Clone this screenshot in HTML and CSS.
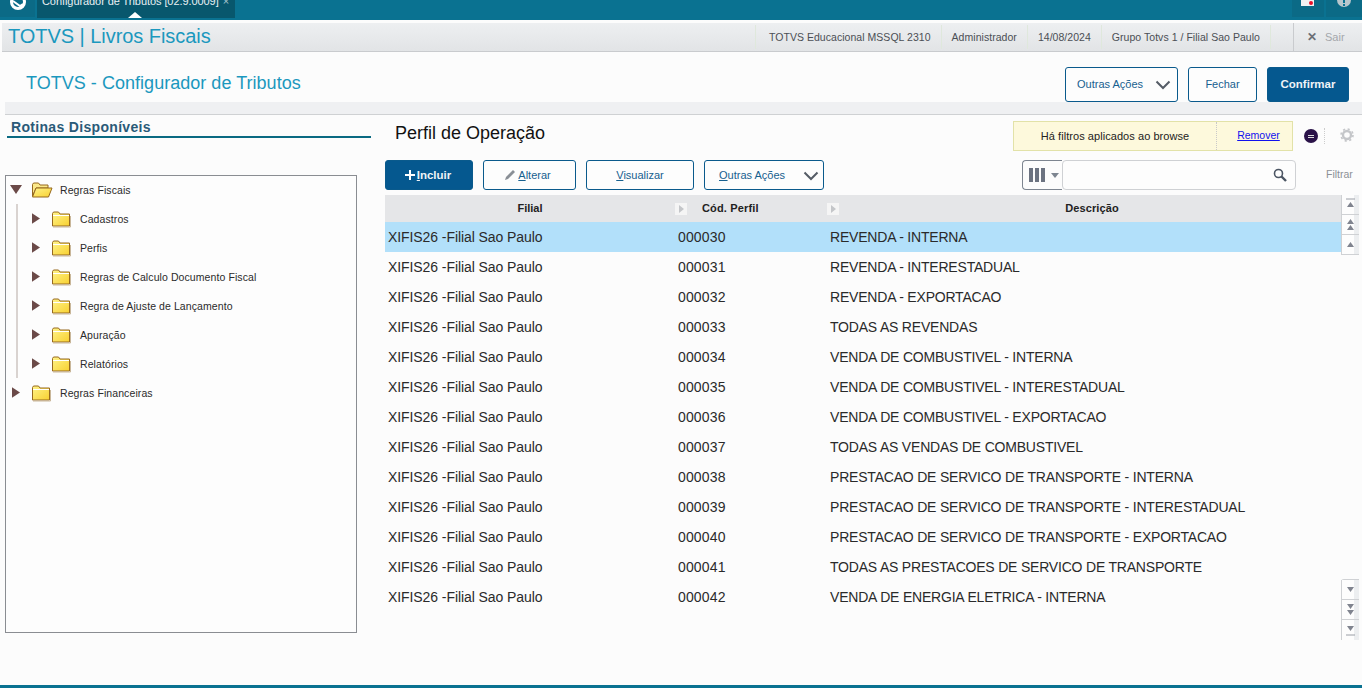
FILE: index.html
```html
<!DOCTYPE html>
<html lang="pt">
<head>
<meta charset="utf-8">
<title>TOTVS | Livros Fiscais</title>
<link rel="stylesheet" href="styles.css">
</head>
<body>
<svg class="defs" width="0" height="0">
  <defs>
    <linearGradient id="fg" x1="0" y1="0" x2="1" y2="1"><stop offset="0" stop-color="#fff48a"/><stop offset="1" stop-color="#f8d030"/></linearGradient>
    <symbol id="folder" viewBox="0 0 20 18">
      <path d="M1.500 16V3.500L2.500 2H7.500L9 4H18.500V16Z" fill="url(#fg)" stroke="#96681f" stroke-width="1"/>
      <path d="M2 5.500H18" stroke="#fff" stroke-width="1"/>
      <path d="M2 17H19.500V6" fill="none" stroke="#c9b79a" stroke-width="1"/>
    </symbol>
    <symbol id="folder-open" viewBox="0 0 22 18">
      <path d="M1.500 15V3.500L2.500 2H7.500L9 4H17V7H5L1.500 15Z" fill="#fbe98a" stroke="#96681f" stroke-width="1"/>
      <path d="M1.500 16L5 7H21L17.500 16Z" fill="url(#fg)" stroke="#96681f" stroke-width="1"/>
    </symbol>
    <symbol id="tri" viewBox="0 0 9 12"><path d="M0 0L9 6L0 12Z" fill="#6b4a48"/></symbol>
  </defs>
</svg>
<div class="page">
  <div class="topbar">
    <div class="logo-cell">
      <svg class="logo" viewBox="0 0 20 20"><circle cx="10" cy="6" r="6.500" fill="none" stroke="#fff" stroke-width="3"/><path d="M5 5L12 10L15 8" stroke="#fff" stroke-width="2" fill="none"/></svg>
    </div>
    <div class="tab">
      <span class="tab-text">Configurador de Tributos [02.9.0009]</span><span class="tab-x">×</span>
      <span class="tab-caret"></span>
    </div>
    <div class="top-spacer"></div>
    <div class="top-cell">
      <svg class="mail" viewBox="0 0 14 8"><rect width="13" height="6" fill="#f2f2f2"/><circle cx="10" cy="3" r="2" fill="#e8102a"/></svg>
    </div>
    <div class="top-cell last">
      <svg class="info" viewBox="0 0 14 8"><circle cx="7" cy="0" r="7" fill="#b8c6cc"/><rect x="6" y="0" width="2" height="3" fill="#0a7291"/><rect x="6" y="4" width="2" height="2" fill="#0a7291"/></svg>
    </div>
  </div>
  <div class="appbar">
    <div class="app-title">TOTVS | Livros Fiscais</div>
    <div class="info-list">
      <span class="info-item first">TOTVS Educacional MSSQL 2310</span>
      <span class="info-item">Administrador</span>
      <span class="info-item">14/08/2024</span>
      <span class="info-item">Grupo Totvs 1 / Filial Sao Paulo</span>
    </div>
    <div class="exit"><span class="exit-x">✕</span><span>Sair</span></div>
  </div>
  <div class="title-row">
    <div class="page-title">TOTVS - Configurador de Tributos</div>
    <div class="title-actions">
      <button class="btn btn-more-top">Outras Ações<svg class="chev" viewBox="0 0 16 10"><path d="M1.500 1.500L8 8L14.500 1.500" fill="none" stroke="#555c66" stroke-width="2"/></svg></button>
      <button class="btn btn-close">Fechar</button>
      <button class="btn primary btn-confirm">Confirmar</button>
    </div>
  </div>
  <div class="strip"></div>
  <div class="main">
    <aside class="left">
      <div class="left-head">Rotinas Disponíveis</div>
      <div class="tree">
        <div class="tree-row top">
          <svg class="arrow-down" viewBox="0 0 12 9"><path d="M0 0H12L6 9Z" fill="#6b4a48"/></svg>
          <svg class="folder-open"><use href="#folder-open"/></svg>
          <span>Regras Fiscais</span>
        </div>
        <div class="tree-children">
          <div class="tree-row"><svg class="arrow"><use href="#tri"/></svg><svg class="folder"><use href="#folder"/></svg><span>Cadastros</span></div>
          <div class="tree-row"><svg class="arrow"><use href="#tri"/></svg><svg class="folder"><use href="#folder"/></svg><span>Perfis</span></div>
          <div class="tree-row"><svg class="arrow"><use href="#tri"/></svg><svg class="folder"><use href="#folder"/></svg><span>Regras de Calculo Documento Fiscal</span></div>
          <div class="tree-row"><svg class="arrow"><use href="#tri"/></svg><svg class="folder"><use href="#folder"/></svg><span>Regra de Ajuste de Lançamento</span></div>
          <div class="tree-row"><svg class="arrow"><use href="#tri"/></svg><svg class="folder"><use href="#folder"/></svg><span>Apuração</span></div>
          <div class="tree-row"><svg class="arrow"><use href="#tri"/></svg><svg class="folder"><use href="#folder"/></svg><span>Relatórios</span></div>
        </div>
        <div class="tree-row closed"><svg class="arrow"><use href="#tri"/></svg><svg class="folder"><use href="#folder"/></svg><span>Regras Financeiras</span></div>
      </div>
    </aside>
    <section class="right">
      <div class="right-head">
        <h1 class="browse-title">Perfil de Operação</h1>
        <div class="filter-note">
          <span class="filter-text">Há filtros aplicados ao browse</span>
          <a class="filter-link" href="#">Remover</a>
        </div>
        <span class="dot"><span class="dot-in"></span></span>
        <span class="sep"></span>
        <svg class="gear" viewBox="0 0 14 14"><circle cx="7" cy="7" r="4" fill="none" stroke="#c4c6c9" stroke-width="2.400"/><circle cx="7" cy="7" r="6" fill="none" stroke="#c4c6c9" stroke-width="1.600" stroke-dasharray="2.200 2.500"/></svg>
      </div>
      <div class="toolbar">
        <button class="btn primary btn-add"><svg class="plus" viewBox="0 0 10 10"><path d="M5 0V10M0 5H10" stroke="#fff" stroke-width="2"/></svg><span><u>I</u>ncluir</span></button>
        <button class="btn btn-edit"><svg class="pen" viewBox="0 0 12 12"><path d="M1 11L2 8L9 1L11 3L4 10Z" fill="#8a8f96"/></svg><span><u>A</u>lterar</span></button>
        <button class="btn btn-view"><span><u>V</u>isualizar</span></button>
        <button class="btn btn-more"><span><u>O</u>utras Ações</span><svg class="chev" viewBox="0 0 16 10"><path d="M1.500 1.500L8 8L14.500 1.500" fill="none" stroke="#555c66" stroke-width="2"/></svg></button>
        <div class="tool-spacer"></div>
        <div class="search">
          <div class="col-pick">
            <svg class="cols" viewBox="0 0 16 14"><path d="M0 0H4V14H0ZM6 0H10V14H6ZM12 0H16V14H12Z" fill="#6b7280"/></svg>
            <span class="caret"></span>
          </div>
          <div class="search-input">
            <svg class="lens" viewBox="0 0 14 14"><circle cx="5.500" cy="5.500" r="4" fill="none" stroke="#4b5563" stroke-width="1.600"/><path d="M8.500 8.500L13 13" stroke="#4b5563" stroke-width="2.400"/></svg>
          </div>
        </div>
        <span class="filter-label">Filtrar</span>
      </div>
      <div class="grid-wrap">
        <div class="grid-scroll">
          <div class="row head">
            <div class="c1">Filial<span class="sort"></span></div>
            <div class="c2">Cód. Perfil<span class="sort"></span></div>
            <div class="c3">Descrição</div>
          </div>
          <div class="row selected"><div class="c1">XIFIS26 -Filial Sao Paulo</div><div class="c2">000030</div><div class="c3">REVENDA - INTERNA</div></div>
          <div class="row"><div class="c1">XIFIS26 -Filial Sao Paulo</div><div class="c2">000031</div><div class="c3">REVENDA - INTERESTADUAL</div></div>
          <div class="row"><div class="c1">XIFIS26 -Filial Sao Paulo</div><div class="c2">000032</div><div class="c3">REVENDA - EXPORTACAO</div></div>
          <div class="row"><div class="c1">XIFIS26 -Filial Sao Paulo</div><div class="c2">000033</div><div class="c3">TODAS AS REVENDAS</div></div>
          <div class="row"><div class="c1">XIFIS26 -Filial Sao Paulo</div><div class="c2">000034</div><div class="c3">VENDA DE COMBUSTIVEL - INTERNA</div></div>
          <div class="row"><div class="c1">XIFIS26 -Filial Sao Paulo</div><div class="c2">000035</div><div class="c3">VENDA DE COMBUSTIVEL - INTERESTADUAL</div></div>
          <div class="row"><div class="c1">XIFIS26 -Filial Sao Paulo</div><div class="c2">000036</div><div class="c3">VENDA DE COMBUSTIVEL - EXPORTACAO</div></div>
          <div class="row"><div class="c1">XIFIS26 -Filial Sao Paulo</div><div class="c2">000037</div><div class="c3">TODAS AS VENDAS DE COMBUSTIVEL</div></div>
          <div class="row"><div class="c1">XIFIS26 -Filial Sao Paulo</div><div class="c2">000038</div><div class="c3">PRESTACAO DE SERVICO DE TRANSPORTE - INTERNA</div></div>
          <div class="row"><div class="c1">XIFIS26 -Filial Sao Paulo</div><div class="c2">000039</div><div class="c3">PRESTACAO DE SERVICO DE TRANSPORTE - INTERESTADUAL</div></div>
          <div class="row"><div class="c1">XIFIS26 -Filial Sao Paulo</div><div class="c2">000040</div><div class="c3">PRESTACAO DE SERVICO DE TRANSPORTE - EXPORTACAO</div></div>
          <div class="row"><div class="c1">XIFIS26 -Filial Sao Paulo</div><div class="c2">000041</div><div class="c3">TODAS AS PRESTACOES DE SERVICO DE TRANSPORTE</div></div>
          <div class="row"><div class="c1">XIFIS26 -Filial Sao Paulo</div><div class="c2">000042</div><div class="c3">VENDA DE ENERGIA ELETRICA - INTERNA</div></div>
        </div>
        <div class="scrollbar">
          <div class="sb-group">
            <div class="sb-btn"><svg viewBox="0 0 18 19"><path d="M4 4H13" stroke="#9a9ea6"/><path d="M5 12L8.500 7L12 12Z" fill="#80848f"/></svg></div>
            <div class="sb-btn"><svg viewBox="0 0 18 19"><path d="M5 9L8.500 4L12 9ZM5 15L8.500 10L12 15Z" fill="#80848f"/></svg></div>
            <div class="sb-btn"><svg viewBox="0 0 18 19"><path d="M5 12L8.500 7L12 12Z" fill="#80848f"/></svg></div>
          </div>
          <div class="sb-group bottom">
            <div class="sb-btn"><svg viewBox="0 0 18 19"><path d="M5 7L8.500 12L12 7Z" fill="#80848f"/></svg></div>
            <div class="sb-btn"><svg viewBox="0 0 18 19"><path d="M5 4L8.500 9L12 4ZM5 10L8.500 15L12 10Z" fill="#80848f"/></svg></div>
            <div class="sb-btn"><svg viewBox="0 0 18 19"><path d="M5 6L8.500 11L12 6Z" fill="#80848f"/><path d="M4 15H13" stroke="#9a9ea6"/></svg></div>
          </div>
        </div>
      </div>
    </section>
  </div>
</div>
</body>
</html>
```

FILE: styles.css
```css
* { box-sizing: border-box; }
html, body { margin: 0; padding: 0; height: 100%; overflow: hidden; background: #fcfcfc; }
body { font-family: "Liberation Sans", Arial, sans-serif; color: #222; }
.defs { position: absolute; }
.page { width: 1362px; height: 688px; display: flex; flex-direction: column; border-bottom: 3px solid #0a7291; }

/* top bar */
.topbar { height: 20px; background: #0a7291; display: flex; flex: none; overflow: hidden; }
.logo-cell { width: 35px; height: 17px; background: #0b6a86; display: flex; justify-content: center; }
.logo { width: 20px; height: 20px; margin-top: -4px; }
.tab { width: 198px; height: 18px; margin-left: 2px; background: #08576d; color: #e8f0f3; font-size: 11px; padding-left: 5px; line-height: 10px; position: relative; white-space: nowrap; overflow: hidden; }
.tab-text { letter-spacing: -.07px; position: relative; top: -4px; }
.tab-x { position: relative; top: -4px; margin-left: 4px; color: #a9c6d0; }
.tab-caret { position: absolute; left: 91px; bottom: 0; width: 0; height: 0; border-left: 7px solid transparent; border-right: 7px solid transparent; border-bottom: 6px solid #fff; }
.top-spacer { flex: 1; }
.top-cell { width: 32px; height: 17px; background: #0b6a86; display: flex; justify-content: center; margin-left: 2px; }
.top-cell.last { width: 36px; }
.mail { width: 14px; height: 8px; }
.info { width: 14px; height: 8px; }

/* app bar */
.appbar { margin: 3px 0 0 2px; height: 29px; flex: none; display: flex; align-items: center; background: linear-gradient(#edeff1, #e2e4e6); border-bottom: 1px solid #c9cbce; }
.app-title { font-size: 20px; letter-spacing: -.05px; color: #1b98be; padding: 0 0 2px 6px; flex: 1; }
.info-list { display: flex; height: 24px; align-items: center; margin-right: 22px; padding-bottom: 1px; }
.info-item { font-size: 10.500px; letter-spacing: .04px; color: #4b4f55; padding: 0 10px; line-height: 24px; border-right: 1px solid #dfe8dc; white-space: nowrap; }
.info-item.first { border-left: 1px solid #dfe8dc; padding-left: 13px; }
.exit { width: 69px; height: 28px; border-left: 1px solid #c9cbce; display: flex; align-items: center; padding-left: 13px; gap: 8px; font-size: 11px; color: #a4a7ab; }
.exit-x { color: #6b6f75; font-size: 12px; font-weight: bold; }

/* title row */
.title-row { height: 50px; flex: none; display: flex; align-items: flex-start; justify-content: space-between; padding: 15px 13px 0 26px; }
.page-title { font-size: 18px; letter-spacing: .03px; color: #1b98be; line-height: 33px; }
.title-actions { display: flex; gap: 10px; }
.btn { font-family: "Liberation Sans", Arial, sans-serif; height: 35px; border: 1px solid #0a5a8c; border-radius: 3px; background: #fdfdfd; color: #17608f; font-size: 11px; padding: 0; display: inline-flex; align-items: center; justify-content: center; white-space: nowrap; }
.btn.primary { background: #05588f; color: #eef3f7; font-weight: bold; font-size: 11.500px; }
.btn-more-top { width: 113px; justify-content: flex-start; padding: 0 0 2px 11px; }
.btn-more-top .chev { margin-left: 12px; }
.btn-close { width: 69px; padding-bottom: 2px; }
.btn-confirm { width: 82px; padding-bottom: 2px; }
.chev { width: 16px; height: 10px; margin-top: 2px; }
.strip { height: 13px; flex: none; margin-left: 5px; background: #eff0f2; border-bottom: 1px solid #cfd1d3; }

/* main */
.main { flex: 1; display: flex; min-height: 0; padding-left: 5px; }
.left { width: 366px; flex: none; }
.left-head { margin: 4px 0 0 2px; height: 19px; border-bottom: 2px solid #0a6a82; font-size: 14px; font-weight: bold; color: #2a5a78; padding-left: 4px; line-height: 16px; letter-spacing: .32px; }
.tree { margin-top: 37px; width: 352px; height: 458px; border: 1px solid #8a8d92; background: #fdfdfd; font-size: 10.500px; letter-spacing: .09px; color: #2b2b2b; }
.tree-row { height: 29px; display: flex; align-items: center; padding-left: 26px; }
.tree-row.top { height: 28px; padding: 0 0 1px 4px; }
.tree-row.closed { padding-left: 6px; }
.arrow { width: 8px; height: 11px; flex: none; margin-right: 11px; }
.arrow-down { width: 12px; height: 9px; flex: none; margin-right: 9px; }
.folder { width: 20px; height: 18px; flex: none; margin-right: 9px; }
.closed .folder { margin-left: 0; }
.folder-open { width: 22px; height: 18px; flex: none; margin-right: 7px; }
.tree-children { margin-left: 10px; border-left: 2px solid #d9d3d0; }
.tree-children .tree-row { padding-left: 14px; }

.right { width: 976px; flex: none; margin-left: 14px; }
.right-head { height: 45px; display: flex; align-items: flex-start; padding-top: 6px; }
.browse-title { margin: 0 0 0 10px; font-size: 18px; font-weight: normal; color: #111; width: 618px; line-height: 24px; }
.filter-note { width: 280px; height: 30px; background: #fdf9dc; border: 1px solid #e2e2a8; display: flex; align-items: center; font-size: 10.500px; color: #222; padding-bottom: 2px; }
.filter-text { width: 203px; font-size: 11px; letter-spacing: .06px; text-align: center; border-right: 1px dotted #c9c9c9; line-height: 28px; height: 28px; margin-bottom: -2px; padding-bottom: 2px; }
.filter-link { flex: 1; padding-left: 8px; text-align: center; color: #1111ee; }
.dot { width: 14px; height: 14px; background: #2a1248; border-radius: 50%; margin: 8px 0 0 11px; display: flex; align-items: center; justify-content: center; }
.dot-in { width: 6px; height: 3px; border-top: 1px solid #ddd; border-bottom: 1px solid #ddd; }
.sep { width: 1px; height: 16px; margin: 7px 0 0 6px; border-left: 1px dotted #ccc; }
.gear { width: 14px; height: 14px; margin: 7px 0 0 15px; }

.toolbar { height: 30px; display: flex; align-items: flex-start; gap: 10px; }
.toolbar .btn { height: 30px; }
.btn-add { width: 88px; gap: 2px; padding-right: 2px; }
.plus { width: 10px; height: 10px; }
.btn-edit { width: 93px; gap: 2px; padding-right: 4px; }
.pen { width: 12px; height: 12px; }
.btn-view { width: 108px; }
.btn-more { width: 120px; padding-left: 14px; justify-content: flex-start; }
.btn-more .chev { margin-left: 18px; }
.tool-spacer { flex: 1; }
.search { display: flex; width: 274px; height: 30px; }
.col-pick { width: 40px; border: 1px solid #7d8590; border-right: none; border-radius: 4px 0 0 4px; display: flex; align-items: center; padding-left: 6px; gap: 6px; }
.cols { width: 16px; height: 14px; }
.caret { width: 0; height: 0; border-left: 4px solid transparent; border-right: 4px solid transparent; border-top: 5px solid #7d8590; }
.search-input { flex: 1; border: 1px solid #cfd1d4; border-radius: 4px; display: flex; align-items: center; justify-content: flex-end; padding-right: 8px; background: #fdfdfd; }
.lens { width: 14px; height: 14px; }
.filter-label { font-size: 10.500px; color: #8c9096; line-height: 28px; margin-left: 20px; width: 35px; flex: none; }

.grid-wrap { display: flex; margin-top: 5px; height: 445px; position: relative; }
.grid-scroll { width: 956px; flex: none; overflow: hidden; }
.row { height: 30px; display: flex; align-items: center; font-size: 14px; color: #2a2a2a; white-space: nowrap; }
.row.head { height: 27px; padding-bottom: 2px; background: #e5e6e8; font-size: 11px; font-weight: bold; color: #222; }
.row.selected { background: #b2e0fa; }
.c1 { width: 293px; padding-left: 3px; letter-spacing: -.08px; flex: none; position: relative; }
.c2 { width: 152px; letter-spacing: .15px; flex: none; position: relative; }
.c3 { flex: 1; letter-spacing: -.2px; }
.head .c1 { width: 302px; padding: 0 12px 0 0; text-align: center; letter-spacing: 0; }
.head .c2 { padding-left: 15px; letter-spacing: .15px; }
.head .c3 { padding-left: 4px; text-align: center; letter-spacing: .1px; }
.sort { position: absolute; right: 0; top: 1px; width: 12px; height: 12px; background: #f5f5f5; }
.sort::after { content: ""; position: absolute; left: 4px; top: 2px; border-left: 5px solid #c4c6c9; border-top: 4px solid transparent; border-bottom: 4px solid transparent; }
.scrollbar { width: 18px; flex: none; display: flex; flex-direction: column; justify-content: space-between; height: 445px; }
.sb-btn { width: 18px; height: 20px; border-left: 1px solid #cfd1d4; border-bottom: 1px solid #cfd1d4; background: linear-gradient(90deg, #fdfdfd 70%, #eceef0 70%); }
.sb-btn svg { width: 18px; height: 19px; display: block; }
.sb-group.bottom { border-top: 1px solid #cfd1d4; border-radius: 3px 0 0 0; }
.sb-group.bottom .sb-btn:last-child { border-bottom: none; }
```
